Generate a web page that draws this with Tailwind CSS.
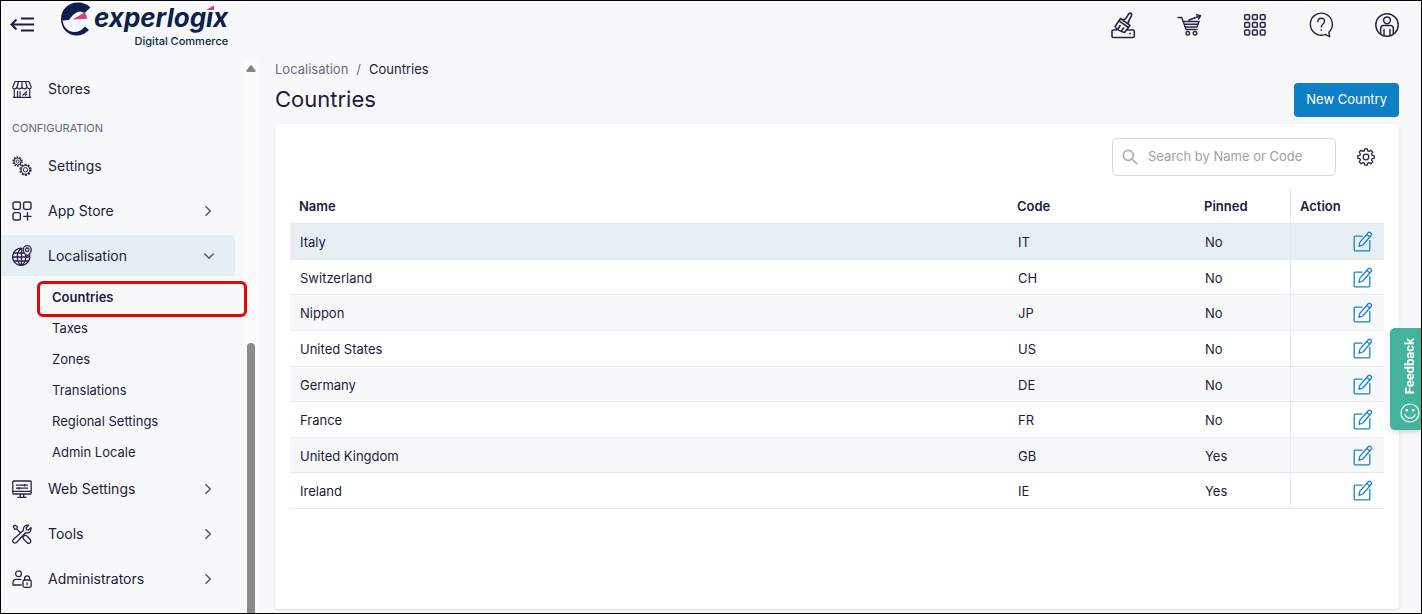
<!DOCTYPE html>
<html lang="en">
<head>
<meta charset="utf-8">
<meta name="viewport" content="width=device-width, initial-scale=1">
<title>Countries</title>
<script src="https://cdn.jsdelivr.net/npm/@tailwindcss/browser@4"></script>
</head>
<body class="font-[Inter,sans-serif] text-[13px] text-[#1d1b3a] bg-[#f7f8fa]">
<svg class="hidden">
  <symbol id="edit" viewBox="0 0 20 21" fill="none" stroke="#1b84c9" stroke-width="1.300" stroke-linejoin="round" stroke-linecap="round">
    <path d="M9 5.200H2Q1.200 5.200 1.200 6V19Q1.200 19.800 2 19.800H16Q16.800 19.800 16.800 19V9.500"/>
    <path d="M6 15.300L6.800 11.400L15.200 1.700Q16.200 .7 17.600 1.800T18.300 4.300L9.800 14ZM13.800 3.500L16.800 6"/>
  </symbol>
  <symbol id="chev" viewBox="0 0 10 10" fill="none" stroke="#5c5c66" stroke-width="1.600" stroke-linecap="round" stroke-linejoin="round"><path d="M3 .8L7.300 5L3 9.200"/></symbol>
</svg>
<div class="min-h-screen border border-black flex flex-col">
  <header class="h-[59px] flex items-start justify-between pl-[9px] pr-5">
    <div class="flex items-start">
      <button aria-label="Collapse menu" class="mt-[15px] w-6 h-[18px]">
        <svg viewBox="0 0 24 18" class="w-6 h-[18px]" fill="none" stroke="#231c3d" stroke-width="2"><path d="M6.500 3.500L1.500 8.500L6.500 13.500M2 8.500H24M11 2.500H24M11 14.500H24"/></svg>
      </button>
      <a href="#" class="ml-[26px] flex items-start text-[#0d1f4a]" aria-label="Experlogix Digital Commerce">
        <svg viewBox="0 0 32 36" class="w-8 h-9">
          <path fill="#0d1f4a" d="M1 18C1 8.500 8.500 1.500 17.500 1.500Q25.500 1.500 30.500 6.500L24.500 12Q21 9.300 17 11.200Q13 13 9 19L2.600 19.500Q3.500 27 9.500 30Q18 33.500 25 25.500L29 29Q23.500 34.600 16.500 34.600C7.500 34.600 1 27.500 1 18Z"/>
          <path fill="#dc3a7d" d="M12.500 18.500L24.500 11.500Q27 14 27.200 17.800Z"/>
        </svg>
        <div class="relative text-right pl-0.5">
          <div class="text-[26px] leading-[33px] font-bold italic">experlogix</div>
          <div class="text-[11px] leading-[14px] font-medium">Digital Commerce</div>
          <svg viewBox="0 0 12 7" class="absolute right-[11px] top-1 w-3 h-[7px]"><path fill="#f7f8fa" d="M0 0H12V7H0Z"/><path fill="#dc3a7d" d="M1 5L9 .5V5Z"/></svg>
        </div>
      </a>
    </div>
    <nav aria-label="Tools" class="flex gap-[38px] mt-[10px]">
      <button aria-label="Clear cache"><svg viewBox="0 0 28 28" class="w-7 h-7" fill="none" stroke="#2a2444" stroke-width="1.600" stroke-linejoin="round" stroke-linecap="round"><path d="M7.500 19H4.300Q3 19 3 20.300V25.200Q3 26.500 4.300 26.500H24Q25.300 26.500 25.300 25.200V20.300Q25.300 19 24 19H18.500M21 22.200V22.800M11.500 7.500L21 14.300L19.500 16.500L10 9.800ZM10 9.800L6 15.500Q8 19.500 15.500 21.500L19.500 16.500M9 18L11 14.500M12.500 20L14.500 17M14 9L15 8.500Q17 8 19 4Q20.500 1.200 22.200 2.400Q23.500 3.500 21.500 6.500Q19 10 19.300 13"/></svg></button>
      <button aria-label="Orders"><svg viewBox="0 0 28 28" class="w-7 h-7" fill="none" stroke="#2a2444" stroke-width="1.400" stroke-linejoin="round" stroke-linecap="round"><path d="M3 6.500H6.800L11 18.500H22M8 10.500H24L22 16H10M9 13.200H23M14 9L25 5M21.500 3.800L25.500 4.800L23.500 8.200"/><circle cx="12.800" cy="22.300" r="1.800"/><circle cx="20" cy="22.300" r="1.800"/></svg></button>
      <button aria-label="Apps"><svg viewBox="0 0 28 28" class="w-7 h-7" fill="none" stroke="#2a2444" stroke-width="1.500"><g id="r"><rect x="3.700" y="3.700" width="4.800" height="4.800" rx="1"/><rect x="11.500" y="3.700" width="4.800" height="4.800" rx="1"/><rect x="19.300" y="3.700" width="4.800" height="4.800" rx="1"/></g><use href="#r" y="7.700"/><use href="#r" y="15.400"/></svg></button>
      <button aria-label="Help"><svg viewBox="0 0 28 28" class="w-7 h-7" fill="none" stroke="#2a2444" stroke-width="1.400" stroke-linejoin="round" stroke-linecap="round"><path d="M18.500 23.400A11 11 0 1 1 21.800 21.300Q22.500 24 22.600 25.700Q20.200 24.800 18.500 23.400M10.800 10.600Q11 7.300 14.300 7.300T17.500 10.400C17.500 13 14.300 13 14.300 16M14.300 18.800V19.200"/></svg></button>
      <button aria-label="Account"><svg viewBox="0 0 28 28" class="w-7 h-7" fill="none" stroke="#2a2444" stroke-width="1.500" stroke-linecap="round"><circle cx="14" cy="14" r="11.200"/><circle cx="14" cy="9.300" r="3.400"/><path d="M7.700 22.500V17.500Q7.700 14.600 10.600 14.600H17.400Q20.300 14.600 20.300 17.500V22.500M11 18.500V24.500M17 18.500V24.500"/></svg></button>
    </nav>
  </header>
  <div class="flex-1 flex">
    <aside class="w-[257px] shrink-0 flex">
      <nav aria-label="Main" class="flex-1 pt-2 pr-[9px] text-[14px]">
        <a href="#" class="flex items-center h-[41px] pl-[11px] gap-4"><svg viewBox="0 0 20 20" class="w-5 h-5" fill="none" stroke="#2a2444" stroke-width="1.200" stroke-linejoin="round"><path d="M3 2.500H17L19.200 8Q19.200 9.800 17.500 9.800T15 8Q14.500 9.800 12.500 9.800T10 8Q9.500 9.800 7.500 9.800T5 8Q4.500 9.800 2.500 9.800T.8 8ZM6.500 2.500L5 8M10 2.500V8M13.500 2.500L15 8M2.300 10V18M17.700 10V18M.8 18.300H19.200M5.500 12V18M8 12V18M10.500 16.500L15 12.500M13 16.500L15 14.700"/></svg>Stores</a>
        <h2 class="mt-[9px] mb-[7px] pl-[11px] text-[11px] leading-5 text-[#66666f]">CONFIGURATION</h2>
        <a href="#" class="flex items-center h-[41px] mb-1 pl-[11px] gap-4"><svg viewBox="0 0 20 20" class="w-5 h-5" fill="none" stroke="#2a2444"><circle cx="5.500" cy="5.500" r="4.300" stroke-width="1.800" stroke-dasharray="1.500 1.200"/><circle cx="5.500" cy="5.500" r="3.500"/><circle cx="5.500" cy="5.500" r="1.500"/><circle cx="13.500" cy="13.800" r="5.200" stroke-width="1.800" stroke-dasharray="2 1.267"/><circle cx="13.500" cy="13.800" r="4.400"/><circle cx="13.500" cy="13.800" r="2.200"/></svg>Settings</a>
        <a href="#" class="flex items-center h-[41px] mb-1 pl-[11px] pr-[22px] gap-4"><svg viewBox="0 0 20 20" class="w-5 h-5" fill="none" stroke="#2a2444" stroke-width="1.400" stroke-linecap="round"><rect x="1" y="1" width="7.400" height="7.400" rx="1.800"/><rect x="11.600" y="1" width="7.400" height="7.400" rx="1.800"/><rect x="1" y="11.600" width="7.400" height="7.400" rx="1.800"/><path d="M15.500 11.800V19M11.800 15.400H19"/></svg><span class="flex-1">App Store</span><svg class="w-[10px] h-[10px]"><use href="#chev"/></svg></a>
        <a href="#" class="flex items-center h-[41px] mb-1 pl-[11px] pr-[21px] gap-4 bg-[#e6eef5] rounded-r"><svg viewBox="0 0 20 21" class="w-5 h-[21px]" fill="none" stroke="#2a2444" stroke-width="1.300"><path d="M10.500 3.300A8.600 8.600 0 1 0 17.500 9.700M9.500 3.300Q5.300 6 5.300 12T9.500 20.500Q13.700 18 13.700 12V10M9.500 3.300V20.500M2 8H12M.9 12H18M2 16H17"/><path fill="#e6eef5" d="M15.200 11Q11.200 7.500 11.200 4.700A4 4 0 0 1 19.300 4.700Q19.300 7.500 15.200 11Z"/><circle cx="15.200" cy="4.800" r="1.800"/></svg><span class="flex-1">Localisation</span><svg class="w-[10px] h-[10px] rotate-90"><use href="#chev"/></svg></a>
        <ul class="mt-[6px] pl-[51px] text-[13px] leading-[31px]">
          <li class="relative font-semibold"><a href="#" class="block" aria-current="page">Countries</a><span class="absolute -left-[15px] right-[-12px] -top-px h-9 border-3 border-[#e60505] rounded-md z-10 pointer-events-none"></span></li>
          <li><a href="#" class="block">Taxes</a></li>
          <li><a href="#" class="block">Zones</a></li>
          <li><a href="#" class="block">Translations</a></li>
          <li><a href="#" class="block">Regional Settings</a></li>
          <li><a href="#" class="block">Admin Locale</a></li>
        </ul>
        <a href="#" class="flex items-center h-[41px] mb-1 pl-[11px] pr-[22px] gap-4"><svg viewBox="0 0 20 20" class="w-5 h-5" fill="none" stroke="#2a2444" stroke-width="1.300"><rect x=".8" y="2" width="18.400" height="13" rx="1"/><path d="M1 12.300H19M8.300 15V18M11.700 15V18M5.500 18.400H14.500M4 6.200H16M4 9.200H16M12.500 5V7.400M7 8V10.400"/></svg><span class="flex-1">Web Settings</span><svg class="w-[10px] h-[10px]"><use href="#chev"/></svg></a>
        <a href="#" class="flex items-center h-[41px] mb-1 pl-[11px] pr-[22px] gap-4"><svg viewBox="0 0 20 20" class="w-5 h-5" fill="none" stroke="#2a2444" stroke-width="1.300" stroke-linejoin="round" stroke-linecap="round"><path d="M11.300 6.500Q11 3 13.500 1.500Q15 .8 16.500 1.200L14.200 3.800L14.500 5.600L16.500 6L19 3.500Q19.500 6.500 17.500 8.200Q15.600 9.500 13.500 8.700L4.500 18.500Q3 19.600 1.500 18.500T1.300 15.500ZM4.600 4.900L8.200 8.500M1.200 2.500L2.700 1.200L5.300 2.500L5 4.500L3 5.300ZM12.500 11.500Q14 11.200 15 12L18.200 15.500Q19.500 17.500 18 18.800T15 18.500L11.500 15Q10.800 14 11 13Z"/></svg><span class="flex-1">Tools</span><svg class="w-[10px] h-[10px]"><use href="#chev"/></svg></a>
        <a href="#" class="flex items-center h-[41px] pl-[11px] pr-[22px] gap-4"><svg viewBox="0 0 20 20" class="w-5 h-5" fill="none" stroke="#2a2444" stroke-width="1.300" stroke-linecap="round"><circle cx="6.500" cy="4.800" r="2.900"/><path d="M9.200 16H1V13.500Q1 10.300 4.500 10.300H9"/><rect x="11" y="11" width="8.200" height="7.300" rx="1.500"/><path d="M12.700 11V9.300Q12.700 6.900 15.100 6.900T17.500 9.300V11M15.100 14V15.500"/></svg><span class="flex-1">Administrators</span><svg class="w-[10px] h-[10px]"><use href="#chev"/></svg></a>
      </nav>
      <div class="w-[14px] bg-[#fbfbfc] flex flex-col items-center pt-[5px]" aria-hidden="true">
        <svg viewBox="0 0 10 7" class="w-[10px] h-[7px]"><path fill="#868686" d="M4.200 .6Q5 -.3 5.800 .6L9.500 5.300Q10 6.900 8.800 7H1.200Q0 6.900 .5 5.300Z"/></svg>
        <div class="mt-[271px] w-2 flex-1 bg-[#8a8a8a] rounded-t"></div>
      </div>
    </aside>
    <main class="flex-1 pl-[17px] pr-[22px] pb-1 flex flex-col">
      <nav aria-label="Breadcrumb" class="flex gap-2 leading-[18px]"><a href="#" class="text-[#6d6b7e]">Localisation</a><span class="text-[#6d6b7e]">/</span><span>Countries</span></nav>
      <div class="mt-[5px] flex items-start justify-between">
        <h1 class="text-[22px] leading-8">Countries</h1>
        <button class="h-[34px] px-3 rounded bg-[#0f7fc6] text-white">New Country</button>
      </div>
      <section class="mt-[7px] flex-1 bg-white rounded shadow px-[15px] pt-[14px]">
        <div class="flex justify-end items-center gap-[21px] pr-[9px]">
          <label class="flex items-center w-[224px] h-[38px] px-[9px] gap-[10px] border border-[#d5d5de] rounded-[5px]">
            <svg viewBox="0 0 16 16" class="w-4 h-4 shrink-0" fill="none" stroke="#adadb5" stroke-width="1.700"><circle cx="6.300" cy="6.300" r="5"/><path d="M10 10L15.200 15.200"/></svg>
            <input type="search" aria-label="Search" placeholder="Search by Name or Code" class="w-full min-w-0 outline-none placeholder:text-[#a0a0a6]">
          </label>
          <button aria-label="Table settings"><svg viewBox="0 0 18 18" class="w-[18px] h-[18px]" fill="none" stroke="#2a2444" stroke-width="1.300" stroke-linejoin="round"><circle cx="9" cy="9" r="2.800"/><path d="M7.700 .8H10.300L10.700 2.900L12 3.400L13.900 2.200L15.800 4.100L14.600 6L15.100 7.300L17.200 7.700V10.300L15.100 10.700L14.600 12L15.800 13.900L13.900 15.800L12 14.600L10.700 15.100L10.300 17.200H7.700L7.300 15.100L6 14.600L4.100 15.800L2.200 13.900L3.400 12L2.900 10.700L.8 10.300V7.700L2.900 7.300L3.400 6L2.200 4.100L4.100 2.200L6 3.400L7.300 2.900Z"/></svg></button>
        </div>
        <table class="mt-3 w-full table-fixed border-separate border-spacing-0 text-left [&_td]:px-[10px] [&_td]:pt-[3px] [&_td]:pb-0 [&_td]:border-b [&_td]:border-[#e8e9ec] [&_th]:px-[9px] [&_th]:pt-0.5 [&_th]:border-b [&_th]:border-[#e8e9ec] [&_th]:font-semibold [&_tr>*:last-child]:border-l [&_tr>*:last-child]:border-l-[#e8e9ec] [&_tr>td:last-child]:pt-0 [&_tr>td:last-child]:pr-[11px] [&_td_svg]:w-5 [&_td_svg]:h-[21px] [&_td_button]:block [&_td_button]:ml-auto">
          <colgroup><col><col class="w-[187px]"><col class="w-[95px]"><col class="w-[94px]"></colgroup>
          <thead><tr class="h-9"><th scope="col">Name</th><th scope="col">Code</th><th scope="col">Pinned</th><th scope="col">Action</th></tr></thead>
          <tbody>
            <tr class="h-9 bg-[#e7eff5]"><td>Italy</td><td>IT</td><td>No</td><td><button aria-label="Edit Italy"><svg><use href="#edit"/></svg></button></td></tr>
            <tr class="h-[35px]"><td>Switzerland</td><td>CH</td><td>No</td><td><button aria-label="Edit Switzerland"><svg><use href="#edit"/></svg></button></td></tr>
            <tr class="h-9 bg-[#f7f8fa]"><td>Nippon</td><td>JP</td><td>No</td><td><button aria-label="Edit Nippon"><svg><use href="#edit"/></svg></button></td></tr>
            <tr class="h-9"><td>United States</td><td>US</td><td>No</td><td><button aria-label="Edit United States"><svg><use href="#edit"/></svg></button></td></tr>
            <tr class="h-[35px] bg-[#f7f8fa]"><td>Germany</td><td>DE</td><td>No</td><td><button aria-label="Edit Germany"><svg><use href="#edit"/></svg></button></td></tr>
            <tr class="h-9"><td>France</td><td>FR</td><td>No</td><td><button aria-label="Edit France"><svg><use href="#edit"/></svg></button></td></tr>
            <tr class="h-[35px] bg-[#f7f8fa]"><td>United Kingdom</td><td>GB</td><td>Yes</td><td><button aria-label="Edit United Kingdom"><svg><use href="#edit"/></svg></button></td></tr>
            <tr class="h-9"><td>Ireland</td><td>IE</td><td>Yes</td><td><button aria-label="Edit Ireland"><svg><use href="#edit"/></svg></button></td></tr>
          </tbody>
        </table>
      </section>
    </main>
  </div>
</div>
<button class="fixed right-px top-[328px] w-[31px] h-[102px] rounded-l-[5px] bg-[#43b39c] text-white shadow-md flex flex-col items-center justify-between pt-[10px] pb-[7px] pl-2">
  <span class="font-[Roboto,sans-serif] font-bold text-[13px] leading-5 [writing-mode:vertical-rl] rotate-180">Feedback</span>
  <svg viewBox="0 0 20 20" class="w-5 h-5 shrink-0" fill="none" stroke="white" stroke-width="1.200" stroke-linecap="round"><circle cx="10" cy="10" r="9"/><path d="M5 11.500Q6.500 15.200 10 15.200T15 11.500"/><circle cx="6.800" cy="7.300" r=".7" fill="white"/><circle cx="13.200" cy="7.300" r=".7" fill="white"/></svg>
</button>
</body>
</html>
